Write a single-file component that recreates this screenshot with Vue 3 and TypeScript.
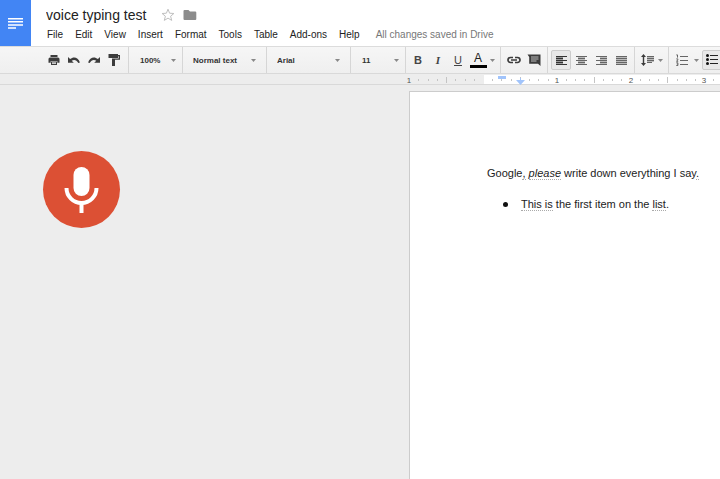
<script setup lang="ts">
import { computed, onBeforeUnmount, onMounted, ref } from 'vue'

const menus: string[] = ['File', 'Edit', 'View', 'Insert', 'Format', 'Tools', 'Table', 'Add-ons', 'Help']
const title = ref('voice typing test')
const zoom = ref('100%')
const paragraphStyle = ref('Normal text')
const fontFamily = ref('Arial')
const fontSize = ref('11')
const listening = ref(true)

interface Tick { x: number; half: boolean }
interface Mark { x: number; label: string }

// The ruler shows four inches in 295 pixels; zero is the page's left margin.
const inch = 295 / 4
const origin = 74
const scale = ref<SVGSVGElement | null>(null)
const scaleWidth = ref(0)

const positions = computed(() => {
  const out: { n: number; x: number }[] = []
  for (let n = -8; origin + (n * inch) / 8 < scaleWidth.value - 2; n++) {
    out.push({ n, x: Math.round(origin + (n * inch) / 8) })
  }
  return out
})
const ticks = computed<Tick[]>(() =>
  positions.value.filter(p => p.n % 8 !== 0).map(p => ({ x: p.x, half: p.n % 4 === 0 })))
const inchMarks = computed<Mark[]>(() =>
  positions.value.filter(p => p.n % 8 === 0 && p.n !== 0).map(p => ({ x: p.x, label: String(Math.abs(p.n / 8)) })))

function measure() {
  if (scale.value) scaleWidth.value = scale.value.getBoundingClientRect().width
}
onMounted(() => {
  measure()
  window.addEventListener('resize', measure)
})
onBeforeUnmount(() => window.removeEventListener('resize', measure))
</script>

<template>
  <div class="app">
    <header class="header">
      <a class="home" href="#" aria-label="Docs home">
        <svg width="15" height="11" viewBox="0 0 15 11"><path d="M0 0h15v1.500H0zM0 3.100h15v1.500H0zM0 6.200h15v1.500H0zM0 9.300h8v1.500H0z" fill="#fff" /></svg>
      </a>
      <div class="head-main">
        <div class="title-row">
          <input v-model="title" class="title" type="text" aria-label="Document title" />
          <button class="plain" type="button" aria-label="Star">
            <svg width="14" height="14" viewBox="0 0 14 14"><path d="M7 1.200l1.600 4 4.300.3-3.300 2.700 1.100 4.200L7 10.100l-3.700 2.300 1.100-4.200L1.100 5.500l4.300-.3z" fill="#fff" stroke="#c0c0c0" stroke-width="1" /></svg>
          </button>
          <button class="plain" type="button" aria-label="Move to folder">
            <svg width="14" height="12" viewBox="0 0 14 12"><path d="M1.500 1h4L7 2.400h5.200q1.100 0 1.100 1v6.500q0 1.100-1.100 1.100H1.600Q.5 11 .5 9.900V2Q.5 1 1.500 1z" fill="#8c8c8c" /></svg>
          </button>
        </div>
        <nav class="menus">
          <button v-for="m in menus" :key="m" class="menu" type="button">{{ m }}</button>
          <span class="saved">All changes saved in Drive</span>
        </nav>
      </div>
    </header>

    <div class="toolbar" role="toolbar">
      <div class="group history">
        <button class="tool" type="button" aria-label="Print">
          <svg width="12" height="12" viewBox="0 0 12 12"><path d="M2.500 1h7v2h-7zM2 3.600h8q1.500 0 1.500 1.500v3.600H9.300V7H2.700v1.700H.5V5.100Q.5 3.600 2 3.600zM3 7.500h6V11H3z" fill="#3c3c3c" /><path d="M4 8.300h4v1.700H4z" fill="#ccc" /></svg>
        </button>
        <button class="tool" type="button" aria-label="Undo">
          <svg width="12" height="12" viewBox="0 0 12 12"><path d="M0 3v5.800h5.800L3.700 6.700C6 5.200 8.700 5.800 10.300 9l1.600-.6C10.200 3.300 5.600 2.200 2.100 5.100z" fill="#3c3c3c" /></svg>
        </button>
        <button class="tool" type="button" aria-label="Redo">
          <svg width="12" height="12" viewBox="0 0 12 12"><path d="M12 3v5.800H6.200l2.100-2.100C6 5.200 3.300 5.800 1.700 9L.1 8.400C1.800 3.300 6.400 2.200 9.900 5.100z" fill="#3c3c3c" /></svg>
        </button>
        <button class="tool" type="button" aria-label="Paint format">
          <svg width="12" height="14" viewBox="0 0 12 14"><path d="M.5 1H10v1h2v4.800H7V13H4V5.500h6.700V3.300H10V5H.5z" fill="#3c3c3c" /></svg>
        </button>
      </div>

      <label class="group pick pick-zoom">
        <select v-model="zoom" aria-label="Zoom"><option>100%</option><option>150%</option></select>
        <svg class="caret" width="5" height="3" viewBox="0 0 5 3"><path d="M0 0h5L2.500 3z" fill="#888" /></svg>
      </label>
      <label class="group pick pick-text">
        <select v-model="paragraphStyle" aria-label="Styles"><option>Normal text</option><option>Title</option></select>
        <svg class="caret" width="5" height="3" viewBox="0 0 5 3"><path d="M0 0h5L2.500 3z" fill="#888" /></svg>
      </label>
      <label class="group pick pick-text">
        <select v-model="fontFamily" aria-label="Font"><option>Arial</option><option>Georgia</option></select>
        <svg class="caret" width="5" height="3" viewBox="0 0 5 3"><path d="M0 0h5L2.500 3z" fill="#888" /></svg>
      </label>
      <label class="group pick pick-size">
        <select v-model="fontSize" aria-label="Font size"><option>11</option><option>12</option></select>
        <svg class="caret" width="5" height="3" viewBox="0 0 5 3"><path d="M0 0h5L2.500 3z" fill="#888" /></svg>
      </label>

      <div class="group format">
        <button class="tool letter bold" type="button" aria-label="Bold">B</button>
        <button class="tool letter italic" type="button" aria-label="Italic">I</button>
        <button class="tool letter under" type="button" aria-label="Underline">U</button>
        <button class="tool" type="button" aria-label="Text color"><span class="color-letter">A</span></button>
        <svg class="caret" width="5" height="3" viewBox="0 0 5 3"><path d="M0 0h5L2.500 3z" fill="#888" /></svg>
      </div>

      <div class="group insert">
        <button class="tool" type="button" aria-label="Insert link">
          <svg width="14" height="8" viewBox="0 0 14 8"><path d="M6 1.500H3.500a2.500 2.500 0 0 0 0 5H6M8 1.500h2.500a2.500 2.500 0 0 1 0 5H8M4 4h6" fill="none" stroke="#3c3c3c" stroke-width="1.700" /></svg>
        </button>
        <button class="tool" type="button" aria-label="Add comment">
          <svg width="14" height="12" viewBox="0 0 14 12"><path d="M.500.500h13V12L11 9.800H2.200V3z" fill="#3c3c3c" /><path d="M4 3h7.500M4 5h7.500M4 7h5.500" stroke="#ccc" stroke-width=".9" /></svg>
        </button>
      </div>

      <div class="group align">
        <button class="tool on" type="button" aria-label="Align left">
          <svg width="11" height="9" viewBox="0 0 11 9"><path d="M0 0h7v9H0z" fill="#999" /><path d="M0 .5h11M0 2.500h7M0 4.500h11M0 6.500h7M0 8.500h11" stroke="#333" /></svg>
        </button>
        <button class="tool" type="button" aria-label="Align center">
          <svg width="11" height="9" viewBox="0 0 11 9"><path d="M2 0h7v9H2z" fill="#bbb" /><path d="M0 .5h11M2 2.500h7M0 4.500h11M2 6.500h7M0 8.500h11" stroke="#666" /></svg>
        </button>
        <button class="tool" type="button" aria-label="Align right">
          <svg width="11" height="9" viewBox="0 0 11 9"><path d="M4 0h7v9H4z" fill="#bbb" /><path d="M0 .5h11M4 2.500h7M0 4.500h11M4 6.500h7M0 8.500h11" stroke="#666" /></svg>
        </button>
        <button class="tool" type="button" aria-label="Justify">
          <svg width="11" height="9" viewBox="0 0 11 9"><path d="M0 0h11v9H0z" fill="#bbb" /><path d="M0 .5h11M0 2.500h11M0 4.500h11M0 6.500h11M0 8.500h11" stroke="#666" /></svg>
        </button>
      </div>

      <div class="group spacing">
        <button class="tool" type="button" aria-label="Line spacing">
          <svg width="14" height="12" viewBox="0 0 14 12"><path d="M2.500 0L5 3H3.200v6H5l-2.500 3L0 9h1.800V3H0z" fill="#3c3c3c" /><path d="M6 2h7v6H6z" fill="#bbb" /><path d="M6 2.500h7M6 4.500h7M6 6.500h7M6 8.500h5" stroke="#666" /></svg>
        </button>
        <svg class="caret" width="5" height="3" viewBox="0 0 5 3"><path d="M0 0h5L2.500 3z" fill="#888" /></svg>
      </div>

      <div class="group lists">
        <button class="tool" type="button" aria-label="Numbered list">
          <svg width="12" height="12" viewBox="0 0 12 12"><path d="M4 2.500h8M4 6.500h8M4 10.500h8" stroke="#666" /><path d="M.3.900h1.200v2.700M.3 4.900h1.500v1L.5 7.300h1.700M.3 8.800h1.600v2.700H.3M.8 10.100h1" fill="none" stroke="#555" stroke-width=".9" /></svg>
        </button>
        <svg class="caret" width="5" height="3" viewBox="0 0 5 3"><path d="M0 0h5L2.500 3z" fill="#888" /></svg>
        <button class="tool on" type="button" aria-label="Bulleted list">
          <svg width="12" height="12" viewBox="0 0 12 12"><path d="M4 1.500h8M4 5.500h8M4 9.500h8" stroke="#222" /><circle cx="1.500" cy="1.500" r="1.500" fill="#111" /><circle cx="1.500" cy="5.500" r="1.500" fill="#111" /><circle cx="1.500" cy="9.500" r="1.500" fill="#111" /></svg>
        </button>
      </div>
    </div>

    <div class="ruler">
      <svg ref="scale" class="scale" height="11">
        <rect x="75" y="1" width="100%" height="9" fill="#fff" />
        <rect v-for="t in ticks" :key="t.x" :x="t.x" :y="t.half ? 3 : 5" width="1" :height="t.half ? 6 : 2" fill="#c4c4c4" />
        <text v-for="m in inchMarks" :key="m.x" :x="m.x" y="9" text-anchor="middle" class="mark">{{ m.label }}</text>
        <rect x="89" y="2" width="8" height="3" fill="#a1c4fb" />
        <path d="M111 4h1v2h4l-4.500 5L107 6h4z" fill="#a1c4fb" />
      </svg>
    </div>

    <main class="workspace">
      <aside class="voice">
        <button class="mic" type="button" :aria-pressed="listening" aria-label="Voice typing" @click="listening = !listening">
          <svg width="35" height="48" viewBox="0 0 35 48"><rect x="9.500" y="1" width="16" height="29" rx="8" fill="#fff" /><path d="M2.500 22a15 15 0 0 0 30 0" fill="none" stroke="#fff" stroke-width="4" /><path d="M15.500 36h4v11h-4z" fill="#fff" /></svg>
        </button>
      </aside>
      <article class="page">
        <p>Google<u>,</u> <u><em>please</em></u> write down everything I say<u>.</u></p>
        <ul>
          <li><u>This is</u> the first item on the <u>list</u>.</li>
        </ul>
      </article>
    </main>
  </div>
</template>

<style>
body {
  margin: 0;
  background: #ededed;
}
</style>

<style scoped>
.app {
  display: flex;
  flex-direction: column;
  min-height: 100vh;
  overflow: hidden;
  font-family: "Liberation Sans", Arial, sans-serif;
  color: #222;
}
button,
select,
input {
  margin: 0;
  padding: 0;
  border: 0;
  background: none;
  font: inherit;
  color: inherit;
}
svg {
  display: block;
  flex: none;
}
.header {
  display: flex;
  height: 46px;
  background: #fff;
}
.home {
  display: flex;
  align-items: center;
  justify-content: center;
  width: 31px;
  background: #4285f4;
}
.head-main {
  flex: 1;
  padding: 6px 0 0 15px;
}
.title-row {
  display: flex;
  align-items: center;
  gap: 8px;
  height: 18px;
}
.title {
  width: 107px;
  height: 18px;
  font-size: 14px;
}
.plain {
  display: flex;
}
.menus {
  display: flex;
  align-items: center;
  gap: 12px;
  height: 20px;
  padding-left: 1px;
  font-size: 10px;
  white-space: nowrap;
}
.saved {
  margin-left: 4px;
  color: #777;
}
.toolbar {
  display: flex;
  box-sizing: border-box;
  height: 28px;
  border-top: 1px solid #dcdcdc;
  border-bottom: 1px solid #d9d9d9;
  background: linear-gradient(#f6f6f6, #efefef);
}
.group {
  display: flex;
  flex: none;
  align-items: center;
  box-sizing: border-box;
  border-right: 1px solid #d6d6d6;
}
.tool {
  display: flex;
  flex: none;
  align-items: center;
  justify-content: center;
  box-sizing: border-box;
  width: 20px;
  height: 20px;
}
.tool.on {
  border: 1px solid #ccc;
  border-radius: 2px;
  background: #e8e8e8;
}
.history {
  width: 129px;
  padding-left: 44px;
}
.pick-zoom {
  width: 54px;
  padding: 0 6px 0 11px;
}
.pick-size {
  width: 55px;
  padding: 0 6px 0 11px;
}
.pick-text {
  width: 84px;
  padding: 0 10px;
}
.pick select {
  flex: 1;
  min-width: 0;
  appearance: none;
  font-size: 8px;
  font-weight: bold;
  color: #333;
}
.format {
  width: 95px;
  padding-left: 2px;
}
.letter {
  font-size: 11px;
  font-weight: bold;
  color: #444;
}
.italic {
  font-family: "Liberation Serif", serif;
  font-style: italic;
}
.under {
  font-weight: normal;
  text-decoration: underline;
}
.color-letter {
  width: 17px;
  border-bottom: 3px solid #000;
  font-size: 12px;
  line-height: 13px;
}
.format .caret {
  margin-left: 2px;
}
.insert {
  width: 47px;
  padding-left: 3px;
}
.align {
  width: 87px;
  padding-left: 3px;
}
.spacing {
  width: 34px;
  padding-left: 3px;
}
.lists {
  flex: 1;
  min-width: 0;
  padding-left: 3px;
  border-right: 0;
}
.lists .caret {
  margin: 0 3px 0 2px;
}
.ruler {
  display: flex;
  box-sizing: border-box;
  height: 11px;
  padding-left: 409px;
  border-bottom: 1px solid #d9d9d9;
  background: #ededed;
}
.scale {
  flex: 1;
  min-width: 0;
  overflow: visible;
}
.mark {
  font-size: 8px;
  fill: #555;
}
.workspace {
  display: flex;
  flex: 1;
  padding-top: 6px;
  background: #ededed;
}
.voice {
  flex: none;
  box-sizing: border-box;
  width: 409px;
  padding: 60px 0 0 43px;
}
.mic {
  display: flex;
  align-items: center;
  justify-content: center;
  width: 77px;
  height: 77px;
  border-radius: 50%;
  background: #dc5034;
}
.page {
  flex: 1;
  min-width: 0;
  padding: 73px 0 0 77px;
  border: 1px solid #ccc;
  border-right: 0;
  border-bottom: 0;
  background: #fff;
  font-size: 11px;
  line-height: 16px;
  white-space: nowrap;
}
.page p {
  margin: 0;
}
.page ul {
  margin: 15px 0 0;
  padding: 0 0 0 16px;
  list-style: none;
}
.page li {
  display: flow-root;
}
.page li::before {
  content: "";
  display: inline-block;
  width: 5px;
  height: 5px;
  margin: 0 13px 1px 0;
  border-radius: 50%;
  background: #111;
}
.page u {
  border-bottom: 1px dotted #aaa;
  text-decoration: none;
}
</style>
